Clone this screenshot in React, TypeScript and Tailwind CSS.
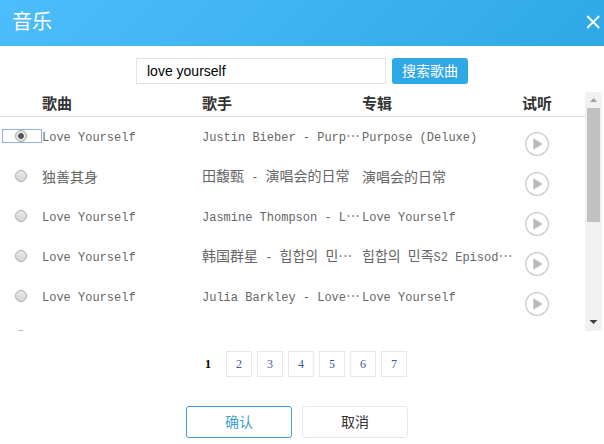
import { useState } from "react";

const songs = [
  { name: "Love Yourself", singer: "Justin Bieber - Purp…", album: "Purpose (Deluxe)" },
  { name: "独善其身", singer: "田馥甄 - 演唱会的日常", album: "演唱会的日常" },
  { name: "Love Yourself", singer: "Jasmine Thompson - L…", album: "Love Yourself" },
  { name: "Love Yourself", singer: "韩国群星 - 힙합의 민…", album: "힙합의 민족S2 Episod…" },
  { name: "Love Yourself", singer: "Julia Barkley - Love…", album: "Love Yourself" },
  { name: "Love Yourself (", singer: "", album: "Love Yourself (" },
];

const pages = [1, 2, 3, 4, 5, 6, 7];

// Latin runs are set in a smaller mono face, CJK and Hangul runs keep the cell's font.
// The ellipsis is its own inline block so it keeps the centred CJK form after Latin text.
function MixedText({ text }: { text: string }) {
  const runs = text.match(/[\x20-\x7e]+|…|[^\x20-\x7e…]+/g) ?? [];
  return (
    <>
      {runs.map((run, i) => {
        if (run === "…") {
          return (
            <span key={i} lang="zh-CN" className="inline-block leading-none">
              {run}
            </span>
          );
        }
        return /^[\x20-\x7e]/.test(run) ? (
          <span key={i} className="font-['Liberation_Mono',monospace] text-xs leading-5">
            {run}
          </span>
        ) : (
          <span key={i}>{run}</span>
        );
      })}
    </>
  );
}

function CloseIcon() {
  return (
    <svg viewBox="0 0 14 14" className="size-3.5" fill="none" stroke="currentColor" strokeWidth="1.8">
      <path d="M1.200 1l12 12M13.200 1l-12 12" />
    </svg>
  );
}

function PlayIcon() {
  return (
    <svg viewBox="0 0 24 24" className="size-6" fill="none">
      <circle cx="12" cy="12" r="11.3" stroke="#cacaca" strokeWidth="1.3" />
      <path d="M8.3 6.3v11.4l9.4-5.7z" fill="#bababa" />
    </svg>
  );
}

function ScrollBar() {
  return (
    <div className="mr-0.5 flex w-[17px] flex-shrink-0 flex-col items-center bg-[#f1f1f1]" aria-hidden="true">
      <svg viewBox="0 0 17 16" className="h-4 w-[17px]">
        <path d="M5 10h7L8.500 6z" fill="#a3a3a3" />
      </svg>
      <div className="h-[114px] w-[13px] bg-[#c1c1c1]" />
      <svg viewBox="0 0 17 16" className="mt-auto h-4 w-[17px]">
        <path d="M4.500 5h8L8.500 9z" fill="#404040" />
      </svg>
    </div>
  );
}

export default function App() {
  const [query, setQuery] = useState("love yourself");
  const [selected, setSelected] = useState(0);
  const [page, setPage] = useState(1);

  return (
    <div className="min-h-screen bg-white font-['Liberation_Sans','Noto_Sans_CJK_SC',sans-serif] text-[#333]">
      <header className="flex h-[46px] items-center justify-between bg-linear-135 from-[#4dbdfb] to-[#2fa8e6] pb-0.5 pl-3 pr-1 text-white">
        <h1 className="text-xl leading-6">音乐</h1>
        <button type="button" aria-label="关闭">
          <CloseIcon />
        </button>
      </header>

      <form className="flex justify-center gap-1.5 pt-3" onSubmit={(e) => e.preventDefault()}>
        <input
          type="text"
          aria-label="歌曲"
          value={query}
          onChange={(e) => setQuery(e.target.value)}
          className="h-[26px] w-[250px] border border-[#e3e3e3] px-2.5 text-sm text-black outline-none"
        />
        <button type="submit" className="h-[26px] w-[76px] rounded-[3px] bg-[#2fa8e6] text-sm leading-5 text-white">
          搜索歌曲
        </button>
      </form>

      <div className="mt-2 flex h-[239px]">
        <div className="min-w-0 flex-1 overflow-hidden">
          <table className="w-full table-fixed text-left">
            <colgroup>
              <col className="w-[42px]" />
              <col />
              <col />
              <col />
              <col className="w-[63px]" />
            </colgroup>
            <thead>
              <tr className="h-6 border-b border-[#ddd] text-[15px] leading-5">
                <th className="p-0" />
                <th className="p-0">歌曲</th>
                <th className="p-0">歌手</th>
                <th className="p-0">专辑</th>
                <th className="p-0">试听</th>
              </tr>
            </thead>
            <tbody className="font-['Noto_Sans_CJK_SC',sans-serif] text-sm leading-5 text-[#666]">
              {songs.map((song, i) => (
                <tr key={i} className="h-10">
                  <td className="p-0">
                    <label className="ml-0.5 flex h-3.5 items-center justify-center pr-0.5 -outline-offset-1 has-checked:outline-1 has-checked:outline-[#8fb4ea]">
                      <input
                        type="radio"
                        name="song"
                        aria-label={song.name}
                        checked={selected === i}
                        onChange={() => setSelected(i)}
                        className="size-3 appearance-none rounded-full border border-[#aaa] bg-linear-to-b from-[#e9e9e9] to-[#d6d6d6] outline-none checked:bg-radial checked:from-[#555] checked:from-35% checked:to-[#e4e4e4] checked:to-45%"
                      />
                    </label>
                  </td>
                  <td className="truncate p-0">
                    <MixedText text={song.name} />
                  </td>
                  <td className="truncate p-0">
                    <MixedText text={song.singer} />
                  </td>
                  <td className="truncate p-0">
                    <MixedText text={song.album} />
                  </td>
                  <td className="p-0 pl-[3px] align-bottom">
                    <button type="button" aria-label="试听" className="block">
                      <PlayIcon />
                    </button>
                  </td>
                </tr>
              ))}
            </tbody>
          </table>
        </div>
        <ScrollBar />
      </div>

      <nav className="mt-5 flex justify-center gap-[5px] pr-0.5 font-['Liberation_Serif',serif] text-xs">
        {pages.map((n) => (
          <button
            key={n}
            type="button"
            onClick={() => setPage(n)}
            className={
              n === page
                ? "size-[26px] font-bold text-black"
                : "size-[26px] border border-[#e8e8e8] text-[#3b5a94]"
            }
          >
            {n}
          </button>
        ))}
      </nav>

      <footer className="mt-[29px] flex justify-center gap-2.5 pr-2.5 pb-1 text-sm leading-5">
        <button type="button" className="h-8 w-[106px] rounded-[3px] border border-[#3f9fcc] text-[#3f9fcc]">
          确认
        </button>
        <button type="button" className="h-8 w-[106px] rounded-[3px] border border-[#e8e8e8]">
          取消
        </button>
      </footer>
    </div>
  );
}
